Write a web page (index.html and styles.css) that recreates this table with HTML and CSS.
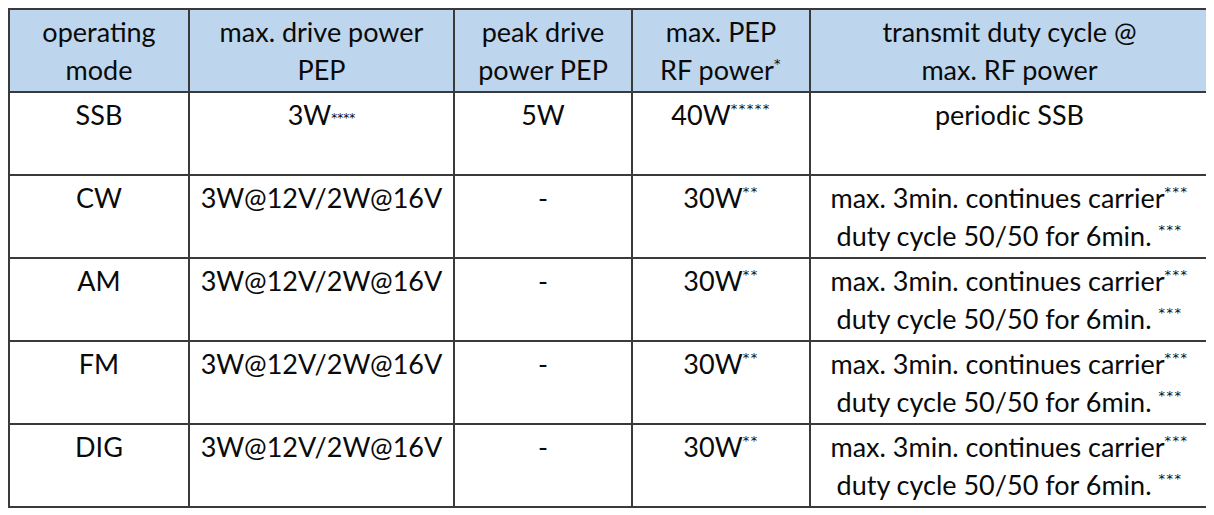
FILE: index.html
```html
<!DOCTYPE html>
<html>
<head>
<meta charset="utf-8">
<link rel="stylesheet" href="styles.css">
</head>
<body>
<table class="spec">
  <colgroup>
    <col class="c1"><col class="c2"><col class="c3"><col class="c4"><col class="c5">
  </colgroup>
  <thead>
    <tr>
      <th>operating<br>mode</th>
      <th>max. drive power<br>PEP</th>
      <th>peak drive<br>power PEP</th>
      <th>max. PEP<br>RF power<sup>*</sup></th>
      <th>transmit duty cycle @<br>max. RF power</th>
    </tr>
  </thead>
  <tbody>
    <tr>
      <td>SSB</td>
      <td>3W<span class="small">****</span></td>
      <td>5W</td>
      <td>40W<sup>*****</sup></td>
      <td>periodic SSB</td>
    </tr>
    <tr>
      <td>CW</td>
      <td>3W@12V/2W@16V</td>
      <td>-</td>
      <td>30W<sup>**</sup></td>
      <td>max. 3min. continues carrier<sup>***</sup><br>duty cycle 50/50 for 6min. <sup>***</sup></td>
    </tr>
    <tr>
      <td>AM</td>
      <td>3W@12V/2W@16V</td>
      <td>-</td>
      <td>30W<sup>**</sup></td>
      <td>max. 3min. continues carrier<sup>***</sup><br>duty cycle 50/50 for 6min. <sup>***</sup></td>
    </tr>
    <tr>
      <td>FM</td>
      <td>3W@12V/2W@16V</td>
      <td>-</td>
      <td>30W<sup>**</sup></td>
      <td>max. 3min. continues carrier<sup>***</sup><br>duty cycle 50/50 for 6min. <sup>***</sup></td>
    </tr>
    <tr>
      <td>DIG</td>
      <td>3W@12V/2W@16V</td>
      <td>-</td>
      <td>30W<sup>**</sup></td>
      <td>max. 3min. continues carrier<sup>***</sup><br>duty cycle 50/50 for 6min. <sup>***</sup></td>
    </tr>
  </tbody>
</table>
</body>
</html>
```
FILE: styles.css
```css
html, body {
  background: #ffffff;
}
body {
  margin: 8px;
  font-family: "Lato", "Carlito", "Liberation Sans", sans-serif;
  color: #0a0a0a;
}
.spec {
  border-collapse: collapse;
  table-layout: fixed;
  width: 1200px;
}
.c1 { width: 180px; }
.c2 { width: 265px; }
.c3 { width: 178px; }
.c4 { width: 178px; }
.c5 { width: 399px; }
.spec th, .spec td {
  border: 2px solid #3a3a3a;
  text-align: center;
  vertical-align: top;
  font-size: 27px;
  font-weight: normal;
  line-height: 38px;
  padding: 3px 2px 0 2px;
  height: 77px;
  box-sizing: border-box;
}
.spec tr {
  height: 83px;
}
.spec th {
  background: #bdd6ee;
}
.spec sup {
  font-family: "DejaVu Sans", sans-serif;
  font-size: 13px;
  letter-spacing: 1.5px;
  line-height: 0;
  vertical-align: 12px;
}
.small {
  font-family: "DejaVu Sans", sans-serif;
  font-size: 12px;
  vertical-align: 3px;
}
```
